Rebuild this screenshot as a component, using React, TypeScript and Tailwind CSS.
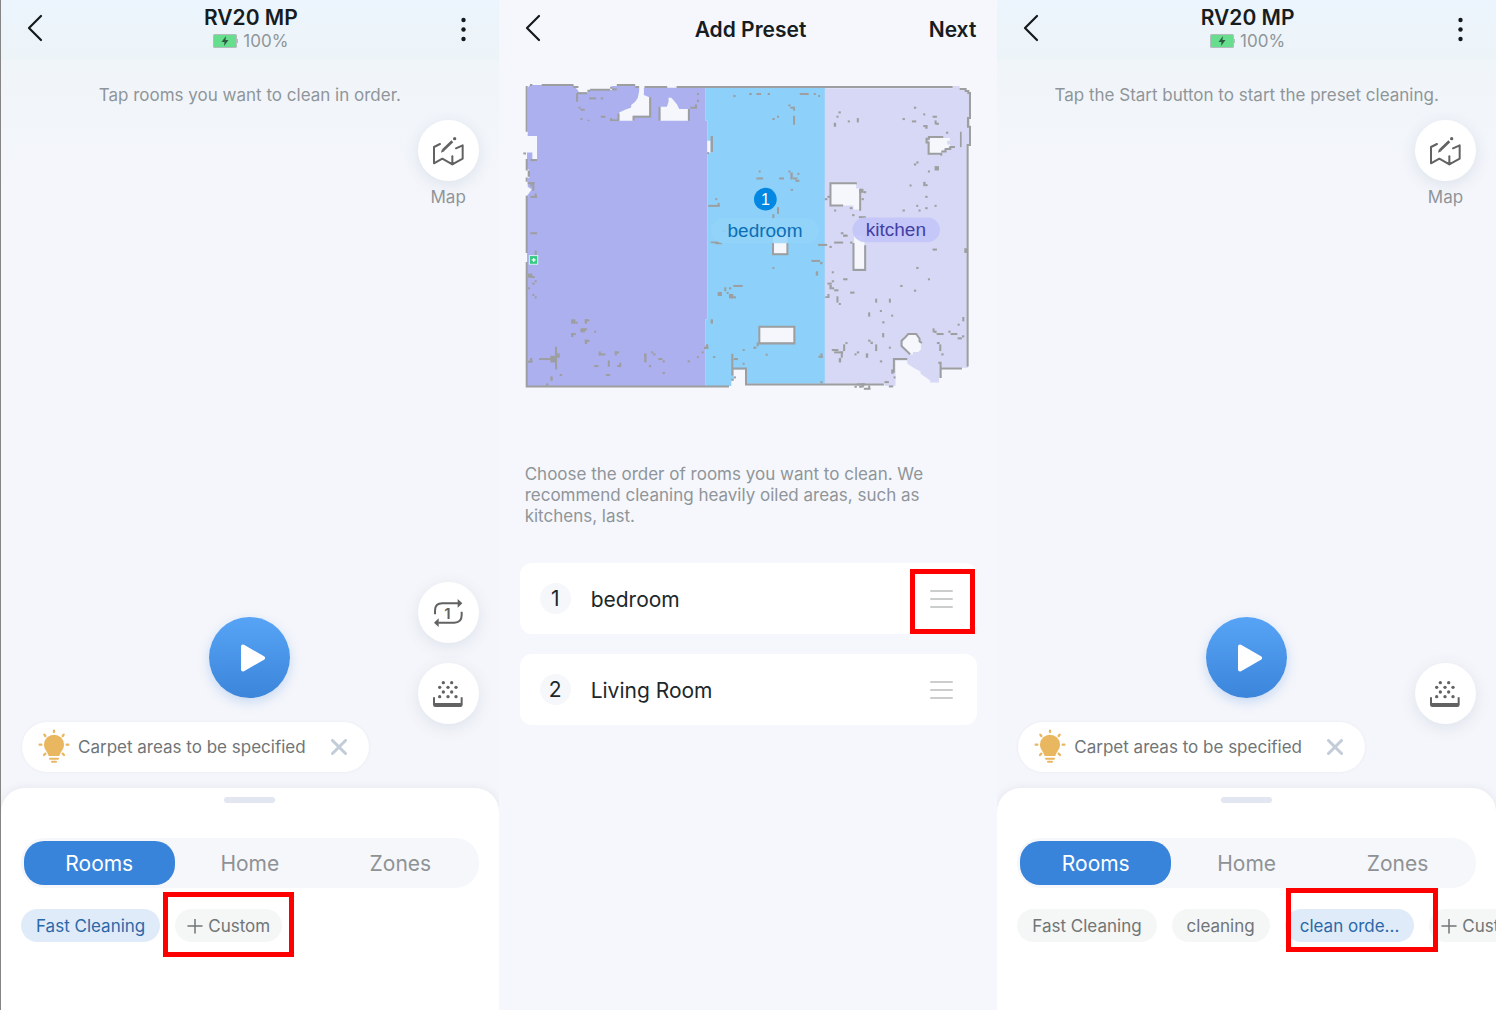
import { ReactNode } from "react";
import clsx from "clsx";

type Box = [number, number, number, number];

// wall fragments picked up by the lidar: x, y, width, height
const NOISE: Box[] = [
  // top left
  [222, 67, 21, 6], [257, 67, 7, 6], [190, 95, 6, 6], [196, 101, 13, 6], [196, 129, 6, 6],
  [217, 134, 6, 4], [257, 122, 14, 6], [285, 129, 6, 8], [285, 133, 24, 5], [291, 40, 14, 6],
  [545, 54, 6, 6], [545, 74, 6, 7], [539, 88, 6, 12], [525, 95, 20, 6], [46, 471, 20, 6],
  [25, 232, 8, 6], [46, 252, 20, 6], [38, 286, 7, 19], [38, 321, 20, 6], [46, 327, 6, 7],
  [52, 321, 6, 26], [59, 355, 6, 13], [46, 362, 20, 6],
  // top middle
  [654, 60, 7, 6], [702, 54, 6, 6], [586, 183, 7, 48], [576, 231, 5, 6], [600, 369, 6, 6],
  [579, 389, 34, 6], [607, 383, 6, 10], [622, 465, 10, 5],
  [703, 54, 6, 6], [723, 54, 14, 6], [757, 54, 7, 6], [853, 54, 27, 6], [895, 54, 6, 6],
  [908, 60, 6, 6], [819, 88, 6, 6], [825, 95, 14, 6], [833, 101, 6, 6], [833, 122, 6, 27],
  [785, 122, 6, 6], [771, 129, 7, 6], [730, 286, 6, 6], [723, 307, 20, 6], [791, 307, 15, 6],
  [819, 286, 6, 6], [825, 292, 7, 21], [833, 307, 13, 6], [846, 293, 6, 6], [840, 314, 12, 6],
  [826, 341, 7, 6], [785, 396, 6, 20], [771, 417, 6, 12],
  // top right
  [955, 143, 7, 12], [963, 122, 6, 6], [969, 109, 7, 6], [997, 136, 6, 6], [1024, 129, 6, 13],
  [1195, 95, 7, 6], [1161, 129, 7, 6], [1189, 136, 13, 6], [1223, 115, 6, 6], [1251, 122, 13, 6],
  [1257, 136, 6, 12], [1261, 143, 9, 6], [1223, 150, 13, 6], [1229, 155, 7, 6], [1291, 170, 7, 6],
  [1333, 170, 5, 46], [1195, 265, 7, 6], [1202, 259, 7, 6], [1237, 286, 6, 6], [1257, 273, 13, 13],
  [1182, 328, 6, 6], [1223, 320, 7, 13], [1229, 327, 7, 6], [1229, 362, 7, 6], [1161, 403, 7, 6],
  [1202, 389, 6, 6], [1209, 403, 6, 6], [1229, 396, 7, 6], [1257, 389, 6, 6], [956, 403, 6, 6],
  [1031, 341, 13, 12], [1044, 348, 8, 6], [1038, 369, 7, 6], [928, 369, 8, 6], [936, 362, 8, 6],
  [1003, 396, 8, 6], [1010, 417, 7, 6], [1030, 423, 21, 6], [976, 471, 8, 6], [983, 478, 13, 6],
  // bottom left
  [59, 526, 6, 13], [38, 595, 14, 12], [46, 602, 13, 6], [59, 615, 6, 6], [52, 622, 7, 6],
  [38, 636, 7, 6], [52, 656, 6, 6], [59, 663, 6, 6], [168, 732, 13, 13], [181, 739, 7, 6],
  [209, 732, 7, 13], [209, 732, 14, 6], [196, 759, 14, 12], [202, 759, 14, 6], [168, 773, 7, 12],
  [168, 773, 14, 6], [237, 766, 6, 6], [209, 793, 7, 13], [209, 793, 14, 7], [120, 814, 6, 68],
  [106, 841, 20, 20], [126, 834, 8, 13], [72, 848, 40, 6], [38, 856, 14, 6], [45, 848, 7, 12],
  [106, 903, 7, 13], [134, 896, 7, 6], [93, 924, 7, 6], [251, 828, 6, 12], [251, 834, 20, 6],
  [299, 828, 13, 6], [299, 828, 6, 12], [278, 855, 6, 19], [237, 869, 13, 6], [306, 869, 12, 6],
  [312, 862, 6, 12], [272, 896, 13, 6], [387, 834, 7, 27], [408, 828, 6, 6], [414, 834, 7, 6],
  [429, 848, 13, 6], [442, 855, 7, 6], [401, 869, 7, 6], [442, 890, 7, 6], [517, 855, 7, 6],
  [545, 842, 6, 6], [559, 828, 6, 6], [566, 814, 13, 7], [572, 807, 7, 12],
  // bottom middle
  [586, 499, 26, 5], [600, 502, 20, 5], [607, 650, 13, 12], [627, 636, 6, 12], [634, 650, 6, 6],
  [641, 636, 7, 6], [654, 629, 28, 6], [641, 656, 13, 13], [648, 663, 14, 6], [586, 732, 7, 13],
  [593, 842, 7, 6], [655, 848, 13, 6], [682, 821, 6, 6], [682, 862, 6, 6], [655, 903, 7, 6],
  [648, 910, 7, 6], [714, 814, 6, 6], [771, 575, 6, 6], [888, 554, 26, 6], [914, 560, 7, 7],
  [901, 588, 7, 13], [724, 801, 6, 12], [717, 814, 6, 6], [751, 835, 6, 6], [909, 841, 13, 6],
  [915, 834, 6, 12], [915, 917, 6, 7],
  // bottom right
  [908, 506, 27, 6], [942, 512, 7, 6], [956, 499, 27, 6], [983, 480, 13, 4], [1004, 499, 7, 6],
  [1251, 520, 13, 6], [1202, 575, 7, 6], [1237, 609, 6, 6], [1154, 629, 7, 6], [1195, 643, 7, 6],
  [949, 588, 6, 6], [983, 609, 13, 6], [949, 615, 7, 6], [936, 622, 13, 6], [942, 629, 7, 13],
  [949, 636, 7, 6], [956, 642, 13, 6], [929, 663, 12, 5], [936, 656, 6, 12], [963, 663, 6, 19],
  [970, 683, 6, 6], [1004, 649, 13, 6], [1079, 670, 6, 12], [1120, 670, 6, 12], [1093, 704, 6, 6],
  [1058, 711, 6, 13], [1127, 718, 6, 6], [1100, 738, 7, 6], [1100, 773, 6, 13], [1340, 725, 6, 13],
  [1326, 745, 6, 6], [1251, 759, 6, 12], [1256, 766, 7, 7], [1263, 773, 21, 6], [1298, 766, 7, 6],
  [1305, 773, 20, 6], [1326, 786, 13, 6], [1339, 780, 7, 6], [1264, 800, 8, 6], [1271, 807, 6, 20],
  [1277, 834, 7, 6], [949, 821, 20, 6], [956, 828, 27, 6], [976, 828, 6, 19], [970, 848, 7, 13],
  [983, 807, 6, 20], [990, 800, 6, 6], [1017, 834, 6, 6], [1024, 828, 7, 6], [1051, 834, 7, 13],
  [1058, 793, 7, 6], [1065, 799, 7, 7], [1079, 807, 6, 20], [1120, 814, 6, 6], [1093, 855, 7, 6],
  [1017, 931, 7, 6], [1024, 924, 27, 6], [1031, 931, 8, 6], [1038, 924, 7, 12], [1045, 937, 20, 6],
  [1058, 930, 6, 10], [1107, 917, 13, 6], [1120, 930, 13, 6], [1127, 882, 7, 13], [1134, 903, 6, 6],
  [1346, 519, 8, 14],
];

const WALLS =
  "M35 33V170M45 30H52M80 30H175M175 36H190M186 55H216M186 55V80M217 47H225M225 44H285M285 38H291M305 30H360M360 36H372M388 36H456M484 36H1311M1332 42H1350V48H1358V54H1363V129H1357V155H1363V210H1356V873M35 252V286M35 307V320M35 362V533M35 560V933H641M651 835V900M651 879H692V927H1105M405 67V125H355V137M310 115V137M433 95V137M521 102V137M1024 324H945V391H983M1034 341V407M1283 186H1240V191H1233V202H1239V236H1277V242M1277 229H1290V222H1304V216H1318M773 503V537H816V503M732 754H837V804H732ZM1014 503V584H1049V510M1135 892V851H1175M1275 908V879H1339M1268 862H1275V880";

const FLOOR_PLAN_LABEL = "Helvetica, 'Liberation Sans', sans-serif";

function FloorPlan() {
  return (
    <svg viewBox="0 0 1410 975" className="block w-full" role="img" aria-label="Floor plan">
      <path
        fill="#adb0ef"
        d="M38 38L45 30H175L190 48V52H218V45H290V33H360L372 40V52H386V38H571V137H576V732H571V932H36V362L45 350L50 343L38 335V310L45 305V286L36 280V232H52V252H66V183H38Z"
      />
      <path fill="#8dd1fa" d="M571 38H930V925H692V882H655V915H648V932H571V732H576V137H571Z" />
      <path
        fill="#d6d8f5"
        d="M928 40H1311V33H1332V40L1363 50V210H1357V877H1278V908H1270V921H1244V915L1215 895V888L1195 878L1175 864V855H1140V931H1107V925H928Z"
      />
      <g fill="#f5f7fc">
        <path d="M372 48H386V60L402 67V122H355V137H312V112L330 104L348 97V90L360 80L368 68Z" />
        <path d="M435 137V95H455L460 80V68H468L475 76L485 88L492 102H518V137Z" />
        <path d="M576 197H586V232H576ZM947 326H1022V340H1034V403H1014V391H947Z" />
        <path d="M1242 189H1303V197H1295V208H1304V214L1290 220L1277 229V234H1242Z" />
        <path d="M773 470H816V535H773ZM734 756H835V802H734ZM1016 480H1047V580H1016Z" />
        <path d="M1178 777H1203L1216 800V822L1208 830H1192V837H1184L1160 813V800Z" />
      </g>
      <path d={WALLS} fill="none" stroke="#9d9e9f" strokeWidth="6" />
      {/* round table */}
      <path
        d="M1184 837L1158 812V796L1170 785L1178 776H1202L1212 790V798L1219 803"
        fill="none"
        stroke="#9d9e9f"
        strokeWidth="6"
      />
      <g fill="#9d9e9f">
        {NOISE.map(([x, y, width, height], i) => (
          <rect key={i} x={x} y={y} width={width} height={height} />
        ))}
      </g>
      {/* charging dock */}
      <rect x="43" y="541" width="25" height="26" fill="#35c982" stroke="#d9f0f0" strokeWidth="3" />
      <path d="M56 548v12M50 554h12" stroke="#fff" strokeWidth="4" />

      <rect x="588" y="430" width="322" height="74" rx="37" fill="#93d3fa" fillOpacity="0.8" />
      <rect x="1011" y="427" width="262" height="74" rx="37" fill="#c3c5f7" fillOpacity="0.92" />
      <circle cx="750" cy="372" r="34" fill="#0288e2" />
      <g textAnchor="middle" fontFamily={FLOOR_PLAN_LABEL}>
        <text x="750" y="389" fontSize="48" fill="#fff">
          1
        </text>
        <text x="749" y="485" fontSize="57" fill="#0a6fb5">
          bedroom
        </text>
        <text x="1141" y="482" fontSize="57" fill="#433fa5">
          kitchen
        </text>
      </g>
    </svg>
  );
}

function BackIcon() {
  return (
    <svg className="h-7 w-4" viewBox="0 0 16 28" fill="none" stroke="#14191c" strokeWidth="2.200" strokeLinecap="round">
      <path d="M14 2L2 14L14 26" strokeLinejoin="round" />
    </svg>
  );
}

function MoreIcon() {
  return (
    <svg className="h-7 w-2" viewBox="0 0 8 28" fill="#14191c">
      <circle cx="4.500" cy="4" r="2.200" />
      <circle cx="4.500" cy="13.500" r="2.200" />
      <circle cx="4.500" cy="23" r="2.200" />
    </svg>
  );
}

function BatteryIcon() {
  return (
    <svg className="h-4 w-[25px]" viewBox="0 0 25 16">
      <rect x="0" y="1" width="24" height="14" rx="1.500" fill="#b3bdbd" />
      <rect x="1" y="2" width="22" height="12" rx="1" fill="#66de8e" />
      <path d="M13 3L8.500 9h3L11 13l4.500-6h-3z" fill="#2c5b41" />
      <path d="M24.500 6v4" stroke="#b3bdbd" />
    </svg>
  );
}

function MapIcon() {
  return (
    <svg className="size-8" viewBox="0 0 96 96" fill="none" stroke="#626262" strokeWidth="6">
      <path d="M24 27L6 36V85L31 71L61 88L92 71V31L72 40" strokeLinejoin="round" strokeLinecap="round" />
      <path d="M61 64V88" strokeLinecap="round" />
      <path d="M52 82L61 91L70 82Z" fill="#626262" stroke="none" />
      <path d="M33 46L61 19" strokeWidth="8" />
      <path d="M27 53L30 42L37 49Z" fill="#626262" stroke="none" />
      <circle cx="68" cy="11" r="5" fill="#626262" stroke="none" />
    </svg>
  );
}

function RepeatIcon() {
  return (
    <svg className="size-8" viewBox="0 0 96 96" fill="none" stroke="#626262" strokeWidth="6">
      <path d="M9 52V41Q9 19 31 19H78" />
      <path d="M89 44V55Q89 77 67 77H19" />
      <path d="M77 6L91 19L77 32ZM20 64L6 77L20 90Z" fill="#626262" stroke="none" />
      <text x="46" y="65" textAnchor="middle" fontSize="45" fontWeight="600" fill="#626262" stroke="none">
        1
      </text>
    </svg>
  );
}

const MOP_DOTS = [
  [34, 14], [59, 14], [23, 28], [48, 28], [72, 28],
  [34, 42], [59, 42], [23, 56], [48, 56], [72, 56],
];

function MopIcon() {
  return (
    <svg className="size-8" viewBox="0 0 96 96" fill="#626262">
      {MOP_DOTS.map(([cx, cy]) => (
        <circle key={`${cx}-${cy}`} cx={cx} cy={cy} r="5" />
      ))}
      <path d="M3 58H9V75H86V58H92V80Q92 87 85 87H10Q3 87 3 80Z" />
    </svg>
  );
}

function BulbIcon() {
  return (
    <svg className="h-9 w-8 shrink-0" viewBox="0 0 96 108" fill="#e9b760" stroke="#e9b760">
      <path
        d="M48 17A30 30 0 0 1 78 47C78 62 67 67 64 81H32C29 67 18 62 18 47A30 30 0 0 1 48 17Z"
        stroke="none"
      />
      <path d="M36 89H60M42 98H54" strokeWidth="6" strokeLinecap="round" />
      <path
        d="M48 5V9M19 17L22 21M77 17L74 21M5 47H10M86 47H91M18 78L22 74M78 78L74 74"
        strokeWidth="7"
        strokeLinecap="round"
      />
    </svg>
  );
}

function PlayIcon() {
  return (
    <svg className="ml-2 size-7" viewBox="0 0 28 28" fill="#fff" stroke="#fff" strokeWidth="4" strokeLinejoin="round">
      <path d="M3 2.500V25.500L23 14Z" />
    </svg>
  );
}

function CloseIcon() {
  return (
    <svg className="size-4" viewBox="0 0 16 16" stroke="#c3ccd9" strokeWidth="3" strokeLinecap="round">
      <path d="M1.500 1.500L14.500 14.500M14.500 1.500L1.500 14.500" />
    </svg>
  );
}

function RoundButton({ label, children }: { label: string; children: ReactNode }) {
  return (
    <button
      type="button"
      aria-label={label}
      className="flex size-[61px] items-center justify-center rounded-full bg-white shadow-[0_4px_16px_rgba(60,90,120,0.12)]"
    >
      {children}
    </button>
  );
}

// red frame drawn over the control the user has to tap
function Highlight({ className }: { className: string }) {
  return <span className={clsx("pointer-events-none absolute z-10 border-5 border-[#fe0000]", className)} />;
}

type Chip = { label: string; active?: boolean; add?: boolean; highlight?: string };

function PresetChip({ chip }: { chip: Chip }) {
  return (
    <div className="relative shrink-0">
      <button
        type="button"
        className={clsx(
          "flex h-[33px] items-center gap-[5px] rounded-full pt-0.5 text-[17px] whitespace-nowrap",
          chip.active ? "bg-[#dfebf8] text-[#2b68a9]" : "bg-[#f5f6f6] text-[#707577]",
          chip.add ? "px-3" : "px-[15px]"
        )}
      >
        {chip.add && (
          <svg className="size-4" viewBox="0 0 16 16" stroke="#707577" strokeWidth="1.500" strokeLinecap="round">
            <path d="M8 0V14M1 7H15" />
          </svg>
        )}
        {chip.label}
      </button>
      {chip.highlight && <Highlight className={chip.highlight} />}
    </div>
  );
}

const TABS = ["Rooms", "Home", "Zones"];

function RobotScreen({
  hint,
  repeat,
  chips,
  className,
}: {
  hint: string;
  repeat?: boolean;
  chips: Chip[];
  className?: string;
}) {
  return (
    <section
      className={clsx(
        "flex min-w-0 flex-col overflow-hidden bg-[#f5f6fb] bg-[linear-gradient(#ecf5fd_0,#edf4f8_60px,#f0f5fa_61px,#f5f6fb_210px)]",
        className
      )}
    >
      <header className="flex h-[60px] items-center justify-between pr-8 pl-[26px]">
        <button type="button" aria-label="Back" className="-mt-1">
          <BackIcon />
        </button>
        <div className="flex flex-col items-center pb-0.5">
          <h1 className="text-[21px] leading-6 font-semibold text-[#171c1f]">RV20 MP</h1>
          <p className="flex items-center gap-[5px] text-[17px] leading-[22px] text-[#8f9599]">
            <BatteryIcon />
            100%
          </p>
        </div>
        <button type="button" aria-label="More">
          <MoreIcon />
        </button>
      </header>

      <p className="mt-[25px] text-center text-[17px] leading-[21px] text-[#8f9599]">{hint}</p>

      <div className="mt-[14px] mr-5 flex flex-col items-center gap-1 self-end">
        <RoundButton label="Edit map">
          <MapIcon />
        </RoundButton>
        <span className="text-[17px] leading-6 text-[#8f9599]">Map</span>
      </div>

      <div className="flex-1" />

      <div className="grid grid-cols-3 items-end px-5">
        <button
          type="button"
          aria-label="Start"
          className="col-start-2 mb-[26px] flex size-[81px] items-center justify-center justify-self-center rounded-full bg-linear-to-b from-[#57a4f6] to-[#3b85da] shadow-[0_4px_12px_rgba(59,133,218,0.25)]"
        >
          <PlayIcon />
        </button>
        <div className="flex flex-col gap-5 justify-self-end">
          {repeat && (
            <RoundButton label="Repeat once">
              <RepeatIcon />
            </RoundButton>
          )}
          <RoundButton label="Mop wash">
            <MopIcon />
          </RoundButton>
        </div>
      </div>

      <div className="-mt-0.5 mb-4 ml-[21px] flex h-[50px] items-center self-start rounded-full bg-white pr-[22px] pl-4 shadow-[0_0_3px_rgba(60,90,120,0.08)]">
        <BulbIcon />
        <span className="ml-2 pt-0.5 text-[17px] text-[#707577]">Carpet areas to be specified</span>
        <button type="button" aria-label="Dismiss" className="ml-[25px]">
          <CloseIcon />
        </button>
      </div>

      <div className="h-[222px] rounded-t-[24px] bg-white px-5 shadow-[0_0_8px_rgba(60,90,120,0.1)]">
        <div className="mx-auto mt-[9px] h-[6px] w-[51px] rounded-full bg-[#e1e6f0]" />
        <div role="tablist" className="mt-[35px] grid h-[50px] grid-cols-3 rounded-[24px] bg-[#f5f7fb] p-[3px]">
          {TABS.map((tab, i) => (
            <button
              key={tab}
              type="button"
              role="tab"
              aria-selected={i === 0}
              className={clsx(
                "rounded-[20px] pt-0.5 text-[21px]",
                i === 0 ? "bg-[#3984db] text-white" : "text-[#8f9295]"
              )}
            >
              {tab}
            </button>
          ))}
        </div>
        <div className="mt-[21px] flex gap-[15px]">
          {chips.map((chip) => (
            <PresetChip key={chip.label} chip={chip} />
          ))}
        </div>
      </div>
    </section>
  );
}

const ROOMS = ["bedroom", "Living Room"];

function AddPresetScreen() {
  return (
    <section className="min-w-0 bg-[#f5f7fc]">
      <header className="flex h-[60px] items-center justify-between pr-[21px] pl-[26px] text-[21px] font-semibold text-[#171c1f]">
        <div className="flex flex-1">
          <button type="button" aria-label="Back" className="-mt-1">
            <BackIcon />
          </button>
        </div>
        <h2>Add Preset</h2>
        <div className="flex flex-1 justify-end">
          <button type="button">Next</button>
        </div>
      </header>

      <div className="pt-[15px] pr-3 pl-4">
        <FloorPlan />
      </div>

      <p className="mt-16 mr-12 ml-[26px] text-[17px] leading-[21px] text-[#8f9599]">
        Choose the order of rooms you want to clean. We recommend cleaning heavily oiled areas, such as kitchens, last.
      </p>

      <ol className="mt-9 flex flex-col gap-5 pr-5 pl-[21px]">
        {ROOMS.map((room, i) => (
          <li key={room} className="relative flex h-[71px] items-center rounded-xl bg-white pr-6 pl-5 text-[21px] text-[#20272a]">
            <span className="flex size-[31px] items-center justify-center rounded-full bg-[#f5f7fb]">{i + 1}</span>
            <span className="ml-5 flex-1 pt-0.5">{room}</span>
            <button type="button" aria-label={`Move ${room}`} className="flex flex-col gap-[6px]">
              <span className="h-[2px] w-[23px] rounded-full bg-[#cbcccd]" />
              <span className="h-[2px] w-[23px] rounded-full bg-[#cbcccd]" />
              <span className="h-[2px] w-[23px] rounded-full bg-[#cbcccd]" />
            </button>
            {i === 0 && <Highlight className="top-[6px] right-[2px] size-[65px]" />}
          </li>
        ))}
      </ol>
    </section>
  );
}

export default function App() {
  return (
    <main className="grid min-h-screen grid-cols-3 bg-white pr-[6px] font-[Inter,sans-serif]">
      <RobotScreen
        className="border-l border-[#858585]"
        hint="Tap rooms you want to clean in order."
        repeat
        chips={[
          { label: "Fast Cleaning", active: true },
          { label: "Custom", add: true, highlight: "-top-[17px] -right-3 -bottom-[15px] -left-3" },
        ]}
      />
      <AddPresetScreen />
      <RobotScreen
        hint="Tap the Start button to start the preset cleaning."
        chips={[
          { label: "Fast Cleaning" },
          { label: "cleaning" },
          { label: "clean orde...", active: true, highlight: "-top-[21px] -right-6 -bottom-[10px] left-[1px]" },
          { label: "Custom", add: true },
        ]}
      />
    </main>
  );
}
